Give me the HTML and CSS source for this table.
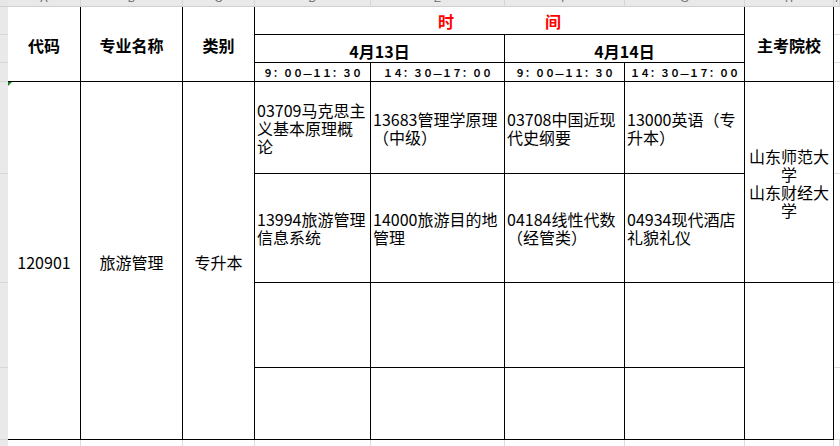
FILE: index.html
```html
<!DOCTYPE html>
<html lang="zh-CN">
<head>
<meta charset="utf-8">
<title>旅游管理 考试安排</title>
<link rel="stylesheet" href="styles.css">
</head>
<body>
<div class="sheet">
  <!-- column header strip -->
  <div class="corner"></div>
  <div class="colhead"><span>A</span></div>
  <div class="colhead"><span>B</span></div>
  <div class="colhead"><span>C</span></div>
  <div class="colhead"><span>D</span></div>
  <div class="colhead"><span>E</span></div>
  <div class="colhead"><span>F</span></div>
  <div class="colhead"><span>G</span></div>
  <div class="colhead"><span>H</span></div>
  <div class="colhead"><span>I</span></div>

  <!-- row 1 -->
  <div class="rowhead"></div>
  <div class="cell head r3">代码</div>
  <div class="cell head r3">专业名称</div>
  <div class="cell head r3">类别</div>
  <div class="cell head c4 title"><span>时</span><span class="gap"></span><span>间</span></div>
  <div class="cell head r3">主考院校</div>
  <div class="out"></div>

  <!-- row 2 -->
  <div class="rowhead"></div>
  <div class="cell head c2 date">4月13日</div>
  <div class="cell head c2 date">4月14日</div>
  <div class="out"></div>

  <!-- row 3 -->
  <div class="rowhead"></div>
  <div class="cell time">９：００—１１：３０</div>
  <div class="cell time">１４：３０—１７：００</div>
  <div class="cell time">９：００—１１：３０</div>
  <div class="cell time">１４：３０—１７：００</div>
  <div class="out"></div>

  <!-- row 4 -->
  <div class="rowhead"></div>
  <div class="cell center r4 flagged"><i class="flag"></i>120901</div>
  <div class="cell center r4">旅游管理</div>
  <div class="cell center r4">专升本</div>
  <div class="cell course">03709马克思主<br>义基本原理概<br>论</div>
  <div class="cell course">13683管理学原理<br>（中级）</div>
  <div class="cell course">03708中国近现<br>代史纲要</div>
  <div class="cell course">13000英语（专<br>升本）</div>
  <div class="cell center r2 school">山东师范大<br>学<br>山东财经大<br>学</div>
  <div class="out"></div>

  <!-- row 5 -->
  <div class="rowhead"></div>
  <div class="cell course">13994旅游管理<br>信息系统</div>
  <div class="cell course">14000旅游目的地<br>管理</div>
  <div class="cell course">04184线性代数<br>（经管类）</div>
  <div class="cell course">04934现代酒店<br>礼貌礼仪</div>
  <div class="out"></div>

  <!-- row 6 -->
  <div class="rowhead"></div>
  <div class="cell"></div>
  <div class="cell"></div>
  <div class="cell"></div>
  <div class="cell"></div>
  <div class="cell r2"></div>
  <div class="out"></div>

  <!-- row 7 -->
  <div class="rowhead"></div>
  <div class="cell"></div>
  <div class="cell"></div>
  <div class="cell"></div>
  <div class="cell"></div>
  <div class="out"></div>

  <!-- row 8 (empty sheet row) -->
  <div class="rowhead last"></div>
  <div class="blank"></div>
  <div class="blank"></div>
  <div class="blank"></div>
  <div class="blank"></div>
  <div class="blank"></div>
  <div class="blank"></div>
  <div class="blank"></div>
  <div class="blank"></div>
  <div class="blank"></div>
</div>
</body>
</html>
```

FILE: styles.css
```css
* {
  box-sizing: border-box;
}

html, body {
  margin: 0;
  padding: 0;
  background: #ffffff;
}

body {
  width: 840px;
  height: 446px;
  overflow: hidden;
  font-family: "Noto Sans CJK SC", "Liberation Sans", sans-serif;
  color: #000;
}

.sheet {
  display: grid;
  grid-template-columns: 8px 73px 102px 72px 116px 134px 120px 120px 89px 1fr;
  grid-template-rows: 7px 28px 28px 19px 92px 109px 85px 72px 1fr;
  width: 840px;
  height: 446px;
}

.corner {
  background: #e6e6e6;
  border-bottom: 1px solid #cfcfcf;
}

.colhead {
  background: #e9e9e9;
  border-bottom: 1px solid #cfcfcf;
  border-right: 1px solid #d6d6d6;
  overflow: hidden;
  text-align: center;
  color: #6a6a6a;
  font-family: "Liberation Sans", sans-serif;
  font-size: 11px;
}

.colhead span {
  display: block;
  line-height: 11px;
  margin-top: -7px;
}

.rowhead {
  background: #e9e9e9;
  border-bottom: 1px solid #d6d6d6;
}

.rowhead.last {
  border-bottom: none;
}

.cell {
  border-right: 1px solid #000;
  border-bottom: 1px solid #000;
  font-size: 16px;
  line-height: 18px;
  display: flex;
  align-items: center;
  white-space: nowrap;
  overflow: hidden;
}

.out {
  border-bottom: 1px solid #dcdcdc;
}

.blank {
  border-right: 1px solid #dcdcdc;
}

.r2 { grid-row: span 2; }
.r3 { grid-row: span 3; }
.r4 { grid-row: span 4; }
.c2 { grid-column: span 2; }
.c4 { grid-column: span 4; }

.head {
  justify-content: center;
  font-weight: 700;
  padding-top: 1px;
}

.title {
  color: #ff0000;
  padding-top: 0;
}

.title .gap {
  display: inline-block;
  width: 91px;
}

.date {
  padding-top: 4px;
}

.time {
  justify-content: center;
  font-weight: 700;
  font-size: 10px;
  line-height: 12px;
  padding-top: 2px;
}

.center {
  justify-content: center;
  text-align: center;
  padding-top: 2px;
}

.course {
  padding-left: 2px;
}

.school {
  line-height: 18px;
}

.flagged {
  position: relative;
}

.flag {
  position: absolute;
  top: 0;
  left: 0;
  width: 0;
  height: 0;
  border-top: 4px solid #1b7d1b;
  border-right: 4px solid transparent;
}
```
